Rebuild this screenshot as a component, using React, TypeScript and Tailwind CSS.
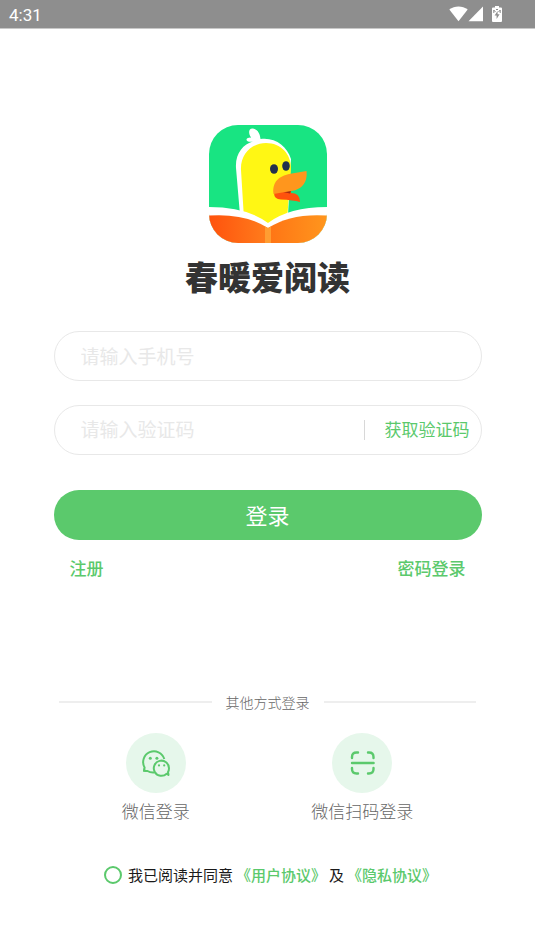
import { useState } from "react";

function StatusBar() {
  return (
    <header className="flex h-7 items-center justify-between bg-[#8e8e8e] pl-[9px] pr-[33px] text-white">
      <span className="pt-0.5 font-[Roboto] text-[17px] leading-6">4:31</span>
      <div className="flex items-center">
        <svg width="19" height="16" viewBox="0 0 19 16" fill="currentColor">
          <path d="M.3 3.6C5.600-.7 13.400-.7 18.700 3.600L9.500 15.200Z" />
        </svg>
        <svg width="16" height="16" viewBox="0 0 16 16" fill="currentColor">
          <path d="M15 .5V15.200H.5Z" />
        </svg>
        <svg className="ml-2" width="10" height="16" viewBox="0 0 10 16">
          <path
            d="M3 0h4v1.500h2q1 0 1 1V15q0 1-1 1H1q-1 0-1-1V2.500q0-1 1-1h2Z"
            fill="currentColor"
          />
          <path d="M5.600 5 2.600 9.500h2V13l3-4.800h-2Z" fill="#8e8e8e" />
          <path d="M1.800 7V4L3.500 6M8.200 7V4L6.500 6M4 3.500h2" fill="none" stroke="#8e8e8e" />
        </svg>
      </div>
    </header>
  );
}

function DuckLogo() {
  return (
    <svg width="118" height="118" viewBox="0 0 118 118" role="img" aria-label="春暖爱阅读">
      <defs>
        <clipPath id="tile">
          <rect width="118" height="118" rx="29" />
        </clipPath>
        <linearGradient id="pageLeft">
          <stop offset="0" stopColor="#ff520d" />
          <stop offset="1" stopColor="#ff7d1c" />
        </linearGradient>
        <linearGradient id="pageRight">
          <stop offset="0" stopColor="#ff7415" />
          <stop offset="1" stopColor="#ff961d" />
        </linearGradient>
      </defs>
      <g clipPath="url(#tile)">
        <rect width="118" height="118" fill="#18e482" />
        <path
          d="M31 90 27 43C26 29 34 19 44 16.500 40 17.500 36 16 38 13.500 39 12.500 41 13 42 12.500 39 8 39.500 3 44 3.500 49 4.500 51 9 51.500 14 66 12 78 21 82 34L79 90Z"
          fill="#fff"
        />
        <path
          d="M35 94 32 45C31 29 43 18 57 18 72 18 82 29 82 43L78 95 59 101Z"
          fill="#fff714"
        />
        <path d="M0 82Q38 82 59 98 80 82 118 82V118H0Z" fill="#fff" />
        <path d="M0 90.500Q36 88 59 103V118H0Z" fill="url(#pageLeft)" />
        <path d="M59 103Q82 88 118 90.500V118H59Z" fill="url(#pageRight)" />
        <path d="M56 101.500 59 103 62 101.500V118H56Z" fill="#ff9d32" />
        <ellipse cx="65" cy="44" rx="4" ry="4.800" fill="#22304d" />
        <ellipse cx="77" cy="41" rx="3.800" ry="4.800" fill="#22304d" />
        <path d="M65 68 82 65V68Q91 68 91 77 84 75 72 74.500 65 74 65 68Z" fill="#ff520d" />
        <path d="M74 67 82 65.500 81 68.500Z" fill="#a52c11" />
        <path d="M64.500 69C63 56 71 51 80 49L97.500 46C99 59 91 65 82 66Z" fill="#ff961d" />
      </g>
    </svg>
  );
}

function WechatIcon() {
  return (
    <svg width="30" height="28" viewBox="0 0 30 28" fill="none" stroke="#5bc96c" strokeWidth="2">
      <path
        d="M13.500 23.500Q9.500 24 6.500 22L3 21.800 3.600 18.500A10.800 10.800 0 1 1 23.300 10"
        strokeLinejoin="round"
      />
      <path
        d="M25.700 24.700A7.600 7.600 0 1 1 28 19.300Q28 21.500 27 23L27.500 26Z"
        strokeLinejoin="round"
      />
      <g fill="#5bc96c" stroke="none">
        <path d="M2.800 19 2 22.500 6.500 23Z" />
        <circle cx="9.300" cy="9.300" r="1.500" />
        <circle cx="15.900" cy="9.300" r="1.500" />
        <circle cx="18" cy="16.400" r="1.100" />
        <circle cx="23.200" cy="16.400" r="1.100" />
      </g>
    </svg>
  );
}

function ScanIcon() {
  return (
    <svg
      width="26"
      height="26"
      viewBox="0 0 26 26"
      fill="none"
      stroke="#5bc96c"
      strokeWidth="2.400"
      strokeLinecap="round"
    >
      <path d="M3 8V7Q3 2.500 7.500 2.500H9M19 2.500h1Q24.500 2.500 24.500 7V8M3 18v1Q3 23.500 7.500 23.500H9M19 23.500h1Q24.500 23.500 24.500 19V18M3 13H24.600" />
    </svg>
  );
}

export default function App() {
  const [agreed, setAgreed] = useState(false);

  const otherLogins = [
    { id: "wechat", label: "微信登录", icon: <WechatIcon /> },
    { id: "scan", label: "微信扫码登录", icon: <ScanIcon /> },
  ];

  return (
    <div className="min-h-screen bg-white font-['Noto_Sans_CJK_SC',sans-serif] text-[#5bc96c]">
      <StatusBar />

      <main className="border-t border-[#c8c8c8]">
        <div className="flex flex-col items-center pt-24">
          <DuckLogo />
          <h1 className="mt-3 text-[33px] font-black leading-[42px] text-[#333333]">春暖爱阅读</h1>
        </div>

        <form className="mt-[34px] px-[10%]" onSubmit={(e) => e.preventDefault()}>
          <input
            type="tel"
            aria-label="手机号"
            placeholder="请输入手机号"
            className="h-[50px] w-full rounded-full border border-[#e8e8e8] px-[26px] pb-0.5 text-[19px] outline-none placeholder:text-[#e8e8e8]"
          />
          <div className="mt-6 flex h-[50px] items-center rounded-full border border-[#e8e8e8] pl-[26px] pr-[11px]">
            <input
              type="text"
              aria-label="验证码"
              placeholder="请输入验证码"
              className="min-w-0 flex-1 pb-0.5 text-[19px] outline-none placeholder:text-[#e8e8e8]"
            />
            <span className="h-5 w-px bg-[#d8d8d8]" />
            <button type="button" className="ml-5 pb-0.5 text-[17px]">
              获取验证码
            </button>
          </div>
          <button
            type="submit"
            className="mt-[35px] h-[50px] w-full rounded-full bg-[#5bc96c] pb-0.5 text-[22px] text-white"
          >
            登录
          </button>
          <div className="mt-4 flex justify-between px-4 text-[17px] font-medium leading-6">
            <a href="#register">注册</a>
            <a href="#password">密码登录</a>
          </div>
        </form>

        <div className="mt-[110px] flex items-center gap-[14px] px-[11%] text-[14px] font-light leading-6 text-[#666666]">
          <span className="h-0.5 flex-1 bg-[#eeeeee]" />
          <span>其他方式登录</span>
          <span className="h-0.5 flex-1 bg-[#eeeeee]" />
        </div>

        <div className="mt-[19px] flex justify-evenly">
          {otherLogins.map((item) => (
            <button key={item.id} type="button" className="flex flex-col items-center">
              <span className="flex size-[60px] items-center justify-center rounded-full bg-[#e6f7eb]">
                {item.icon}
              </span>
              <span className="mt-1.5 text-[17px] font-light leading-6 text-[#666666]">
                {item.label}
              </span>
            </button>
          ))}
        </div>

        <div className="mt-10 flex items-center justify-center gap-1.5 pl-1.5 text-[15px] leading-6">
          <input
            id="agree"
            type="checkbox"
            checked={agreed}
            onChange={(e) => setAgreed(e.target.checked)}
            className="size-[18px] appearance-none rounded-full border-2 border-[#5bc96c] checked:bg-[#5bc96c]"
          />
          <div className="flex gap-[3px]">
            <label htmlFor="agree" className="text-[#1a1a1a]">
              我已阅读并同意
            </label>
            <a href="#terms" className="font-medium">
              《用户协议》
            </a>
            <span className="text-[#1a1a1a]">及</span>
            <a href="#privacy" className="font-medium">
              《隐私协议》
            </a>
          </div>
        </div>
      </main>
    </div>
  );
}
